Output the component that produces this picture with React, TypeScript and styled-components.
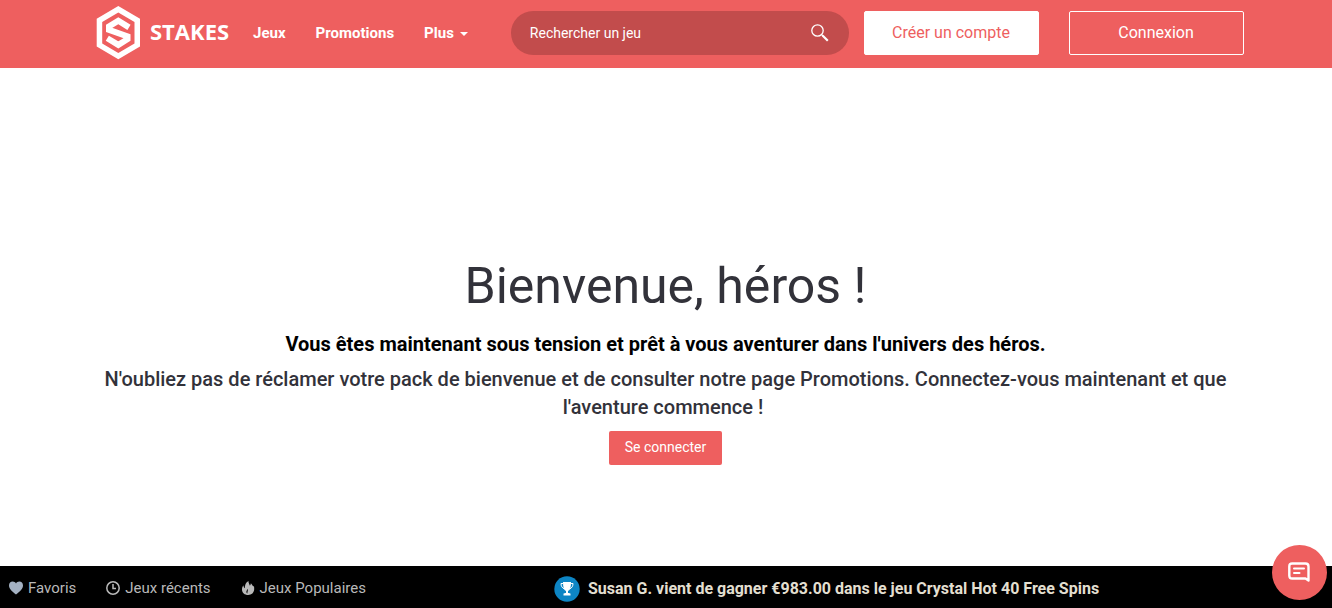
import React from 'react';
import styled, { createGlobalStyle } from 'styled-components';

const coral = '#ee5f5f';

const GlobalStyle = createGlobalStyle`
  * { box-sizing: border-box; }
  body {
    margin: 0;
    background: #fff;
    color: #32323a;
    font-family: Roboto, "Liberation Sans", sans-serif;
  }
  button, input { font-family: inherit; }
`;

const Page = styled.div`
  min-height: 100vh;
  display: flex;
  flex-direction: column;
`;

const Header = styled.header`
  display: flex;
  align-items: center;
  height: 68px;
  padding: 0 88px 2px 96px;
  background: ${coral};
`;

const Brand = styled.a`
  display: flex;
  align-items: center;
  gap: 10px;
  color: #fff;
  text-decoration: none;
  svg { display: block; }
`;

const BrandName = styled.span`
  padding-bottom: 4px;
  font: 700 22px/32px "Open Sans", sans-serif;
`;

const Nav = styled.nav`
  display: flex;
  align-items: center;
  gap: 30px;
  margin-left: 24px;
`;

const NavLink = styled.a`
  display: flex;
  align-items: center;
  gap: 6px;
  color: #fff;
  font-size: 15px;
  line-height: 20px;
  font-weight: 700;
  text-decoration: none;
`;

const Caret = styled.span`
  border: 4px solid transparent;
  border-top-color: #fff;
  border-bottom: 0;
  margin-top: 2px;
`;

const Search = styled.form`
  display: flex;
  align-items: center;
  flex: 1;
  height: 44px;
  margin: 0 15px 0 43px;
  padding: 0 20px 0 19px;
  border-radius: 22px;
  background: #c24c4c;
`;

const SearchInput = styled.input`
  flex: 1;
  min-width: 0;
  padding: 0;
  border: 0;
  outline: 0;
  background: transparent;
  color: #fff;
  font-size: 14px;
  line-height: 20px;
  &::placeholder { color: #fff; opacity: 1; }
`;

const IconButton = styled.button`
  display: flex;
  padding: 0;
  border: 0;
  background: none;
  color: #fff;
  cursor: pointer;
`;

const Actions = styled.div`
  display: flex;
  gap: 30px;
`;

const ActionButton = styled.button<{ $filled?: boolean }>`
  width: 175px;
  height: 44px;
  padding: 0 1px 2px 0;
  border: 1px solid #fff;
  border-radius: 2px;
  background: ${(p) => (p.$filled ? '#fff' : 'transparent')};
  color: ${(p) => (p.$filled ? coral : '#fff')};
  font-size: 16px;
  cursor: pointer;
`;

const Hero = styled.main`
  flex: 1;
  display: flex;
  flex-direction: column;
  align-items: center;
  justify-content: center;
  padding: 88px 97px 0 96px;
  text-align: center;
`;

const Title = styled.h1`
  margin: 0 0 16px;
  font-size: 50px;
  line-height: 56px;
  font-weight: 400;
`;

const Lead = styled.p<{ $strong?: boolean }>`
  margin: 0 0 ${(p) => (p.$strong ? '7px' : '10px')};
  color: ${(p) => (p.$strong ? '#000' : 'inherit')};
  font-size: 20px;
  line-height: 28px;
  font-weight: ${(p) => (p.$strong ? 700 : 500)};
`;

const LoginButton = styled.button`
  height: 34px;
  padding: 0 16px 2px;
  border: 0;
  border-radius: 2px;
  background: ${coral};
  color: #fff;
  font-size: 14px;
  cursor: pointer;
`;

const Footer = styled.footer`
  display: grid;
  grid-template-columns: 554px 1fr;
  align-items: center;
  height: 42px;
  padding-top: 2px;
  background: #000;
`;

const Shortcuts = styled.nav`
  display: flex;
  gap: 30px;
  padding-left: 9px;
`;

const Shortcut = styled.a`
  display: flex;
  align-items: center;
  gap: 5px;
  color: #b9b9b9;
  font-size: 15px;
  line-height: 20px;
  text-decoration: none;
`;

const Winner = styled.div`
  display: flex;
  align-items: center;
  gap: 8px;
  padding-top: 2px;
  color: #e3dfd0;
  font-size: 16px;
  line-height: 24px;
  font-weight: 700;
`;

const ChatButton = styled.button`
  position: fixed;
  right: 5px;
  bottom: 8px;
  display: flex;
  align-items: center;
  justify-content: center;
  width: 55px;
  height: 55px;
  padding: 0 1px 2px 0;
  border: 0;
  border-radius: 50%;
  background: ${coral};
  cursor: pointer;
`;

const LogoMark = () => (
  <svg width="44" height="54" viewBox="0 0 44 54" aria-hidden="true">
    <path fill="#fff" fillRule="evenodd" d="M22.300 0 44 12.800V40.500L22.300 53.300 .7 40.500V12.800ZM22.300 6.400 6.200 15.900V37.400L22.300 46.900 38.500 37.400V15.900Z" />
    <path fill="none" stroke="#fff" strokeWidth="6" d="M33 21.400 22.300 14.800 13 20.500V23.800L31.500 30.300V33.200L22.300 38.900 11.300 32.200" />
  </svg>
);

const SearchIcon = () => (
  <svg width="18" height="18" viewBox="0 0 18 18" fill="none" stroke="currentColor" aria-hidden="true">
    <circle cx="6.500" cy="6.500" r="5.700" strokeWidth="1.300" />
    <path d="M10.500 10.500 12 12" strokeWidth="1.300" />
    <path d="M11.500 11.500 16.800 16.800" strokeWidth="2.200" />
  </svg>
);

const HeartIcon = () => (
  <svg width="14" height="14" viewBox="0 0 14 14" aria-hidden="true">
    <path fill="#a4b1c2" d="M7 13.600C4.500 11.300 0 8.300 0 4.400 0 2.200 1.600.6 3.700.6 5.100.6 6.300 1.300 7 2.500 7.700 1.300 8.900.6 10.300.6 12.400.6 14 2.200 14 4.400 14 8.300 9.500 11.300 7 13.600Z" />
  </svg>
);

const ClockIcon = () => (
  <svg width="14" height="14" viewBox="0 0 14 14" fill="none" stroke="#b9b9b9" strokeWidth="1.500" aria-hidden="true">
    <circle cx="7" cy="7" r="6.200" />
    <path d="M7 3V7.500H10" />
  </svg>
);

const FlameIcon = () => (
  <svg width="14" height="14" viewBox="0 0 14 14" aria-hidden="true">
    <path fill="#b9b9b9" d="M7.500 0C7.300 1.800 8.400 2.800 8.700 4.600 9.500 4 9.900 3.200 9.800 2.200 11.500 3.400 11.200 5 13 5.500 13.200 6.400 13.200 7.200 13.200 8.200 13 11.700 10.600 13.900 7.200 13.900 3.700 13.900 1 11.800 1 8.400 1 6.800 1.500 5.400 2.500 4.300 2.500 5.600 2.900 6.600 3.800 7.300 3.700 4.400 4.700 1.500 7.500 0ZM6.700 7.800C6.300 9 5.400 9.700 5.400 10.900 5.400 11.600 5.800 12.200 6.400 12.500 6.100 11 7.300 9.800 6.700 7.800Z" />
  </svg>
);

const TrophyIcon = () => (
  <svg width="26" height="26" viewBox="0 0 26 26" aria-hidden="true">
    <circle cx="13" cy="13" r="12.700" fill="#0d85c4" />
    <path fill="#fff" d="M9 6H17C17 11 16.300 14 14 15V17H15.500V19H10.500V17H12V15C9.700 14 9 11 9 6ZM9.500 17.500H16.500V19.400H9.500Z" />
    <path fill="none" stroke="#fff" d="M9 7.500H7C7 10 8 12 10.500 13M17 7.500H19C19 10 18 12 15.500 13" />
  </svg>
);

const ChatIcon = () => (
  <svg width="22" height="20" viewBox="0 0 22 20" fill="none" stroke="#fff" strokeWidth="2.400" strokeLinecap="round" strokeLinejoin="round" aria-hidden="true">
    <path d="M4.200 1.500H17.500Q20.500 1.500 20.500 4.500V18.500L17.500 16.500H4.200Q1.300 16.500 1.300 13.500V4.500Q1.300 1.500 4.200 1.500Z" />
    <path d="M6 6.500H16M6 11H11.500" strokeWidth="2" />
  </svg>
);

export default function App() {
  return (
    <Page>
      <GlobalStyle />
      <Header>
        <Brand href="#"><LogoMark /><BrandName>STAKES</BrandName></Brand>
        <Nav>
          <NavLink href="#jeux">Jeux</NavLink>
          <NavLink href="#promotions">Promotions</NavLink>
          <NavLink href="#plus">Plus<Caret /></NavLink>
        </Nav>
        <Search role="search" onSubmit={(e: React.FormEvent) => e.preventDefault()}>
          <SearchInput type="text" placeholder="Rechercher un jeu" aria-label="Rechercher un jeu" />
          <IconButton type="submit" aria-label="Rechercher"><SearchIcon /></IconButton>
        </Search>
        <Actions>
          <ActionButton type="button" $filled>Créer un compte</ActionButton>
          <ActionButton type="button">Connexion</ActionButton>
        </Actions>
      </Header>
      <Hero>
        <Title>Bienvenue, héros !</Title>
        <Lead $strong>Vous êtes maintenant sous tension et prêt à vous aventurer dans l'univers des héros.</Lead>
        <Lead>N'oubliez pas de réclamer votre pack de bienvenue et de consulter notre page Promotions. Connectez-vous maintenant et que l'aventure commence !&nbsp;</Lead>
        <LoginButton type="button">Se connecter</LoginButton>
      </Hero>
      <Footer>
        <Shortcuts>
          <Shortcut href="#favoris"><HeartIcon />Favoris</Shortcut>
          <Shortcut href="#recents"><ClockIcon />Jeux récents</Shortcut>
          <Shortcut href="#populaires"><FlameIcon />Jeux Populaires</Shortcut>
        </Shortcuts>
        <Winner><TrophyIcon />Susan G. vient de gagner €983.00 dans le jeu Crystal Hot 40 Free Spins</Winner>
      </Footer>
      <ChatButton type="button" aria-label="Ouvrir le chat"><ChatIcon /></ChatButton>
    </Page>
  );
}
